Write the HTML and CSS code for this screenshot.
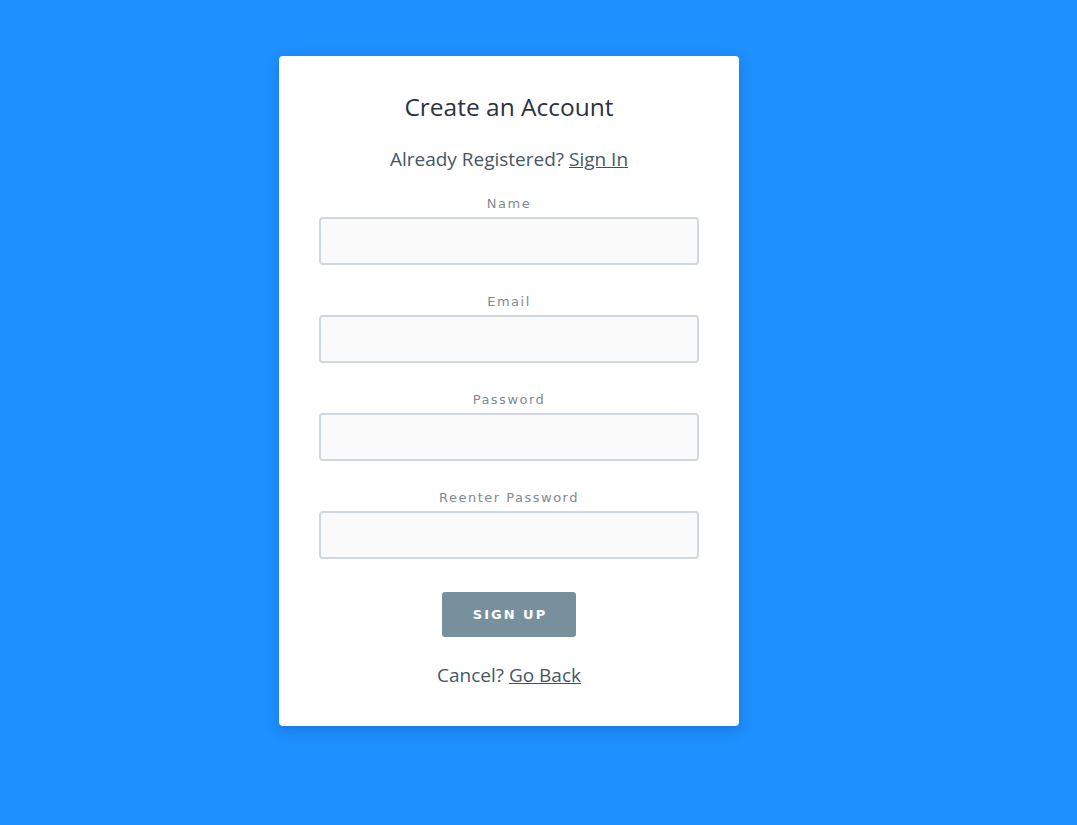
FILE: index.html
```html
<!DOCTYPE html>
<html>
<head>
<meta charset="utf-8">
<link rel="stylesheet" href="styles.css">
</head>
<body>
<div class="page">
  <div class="card">
    <h1 class="title">Create an Account</h1>
    <p class="sub">Already Registered? <a href="#" class="link">Sign In</a></p>
    <form class="form">
      <div class="field">
        <label class="label">Name</label>
        <input class="input" type="text">
      </div>
      <div class="field">
        <label class="label">Email</label>
        <input class="input" type="text">
      </div>
      <div class="field">
        <label class="label">Password</label>
        <input class="input" type="password">
      </div>
      <div class="field">
        <label class="label">Reenter Password</label>
        <input class="input" type="password">
      </div>
      <button class="btn" type="button">SIGN UP</button>
    </form>
    <p class="sub cancel">Cancel? <a href="#" class="link">Go Back</a></p>
  </div>
</div>
</body>
</html>
```
FILE: styles.css
```css
html, body {
  margin: 0;
  padding: 0;
  background: #1e90ff;
  height: 100%;
}
.page {
  display: flex;
  padding-top: 56px;
  padding-left: 279px;
}
.card {
  width: 460px;
  box-sizing: border-box;
  background: #fff;
  border-radius: 4px;
  box-shadow: 0 4px 14px rgba(0, 40, 100, 0.25);
  padding: 36px 40px 37px;
  display: flex;
  flex-direction: column;
  align-items: center;
  font-family: "Open Sans", "Noto Sans", sans-serif;
}
.title {
  margin: 0;
  font-size: 24.5px;
  font-weight: 400;
  line-height: 29px;
  color: #2c3340;
}
.sub {
  margin: 25px 0 0;
  font-size: 19px;
  line-height: 27px;
  color: #465766;
}
.link {
  color: #465766;
  text-decoration: underline;
  text-decoration-color: #44505c;
}
.form {
  display: flex;
  flex-direction: column;
  align-items: center;
  width: 100%;
  margin-top: 23px;
}
.field {
  display: flex;
  flex-direction: column;
  align-items: center;
  width: 100%;
  margin-bottom: 29px;
}
.field:last-of-type {
  margin-bottom: 33px;
}
.label {
  font-family: "DejaVu Sans", Verdana, sans-serif;
  font-size: 13px;
  line-height: 16px;
  letter-spacing: 1.5px;
  color: #7f8a93;
  margin-bottom: 5px;
}
.input {
  width: 380px;
  height: 48px;
  box-sizing: border-box;
  border: 2px solid #d0d7dd;
  border-radius: 4px;
  background: #fafafa;
  margin: 0;
  padding: 0 10px;
}
.btn {
  width: 134px;
  height: 45px;
  border: none;
  border-radius: 3px;
  background: #78909c;
  color: #fff;
  font-family: "DejaVu Sans", Verdana, sans-serif;
  font-weight: 700;
  font-size: 13px;
  letter-spacing: 2px;
  padding: 0 0 0 2px;
}
.cancel {
  margin-top: 25px;
}
```
